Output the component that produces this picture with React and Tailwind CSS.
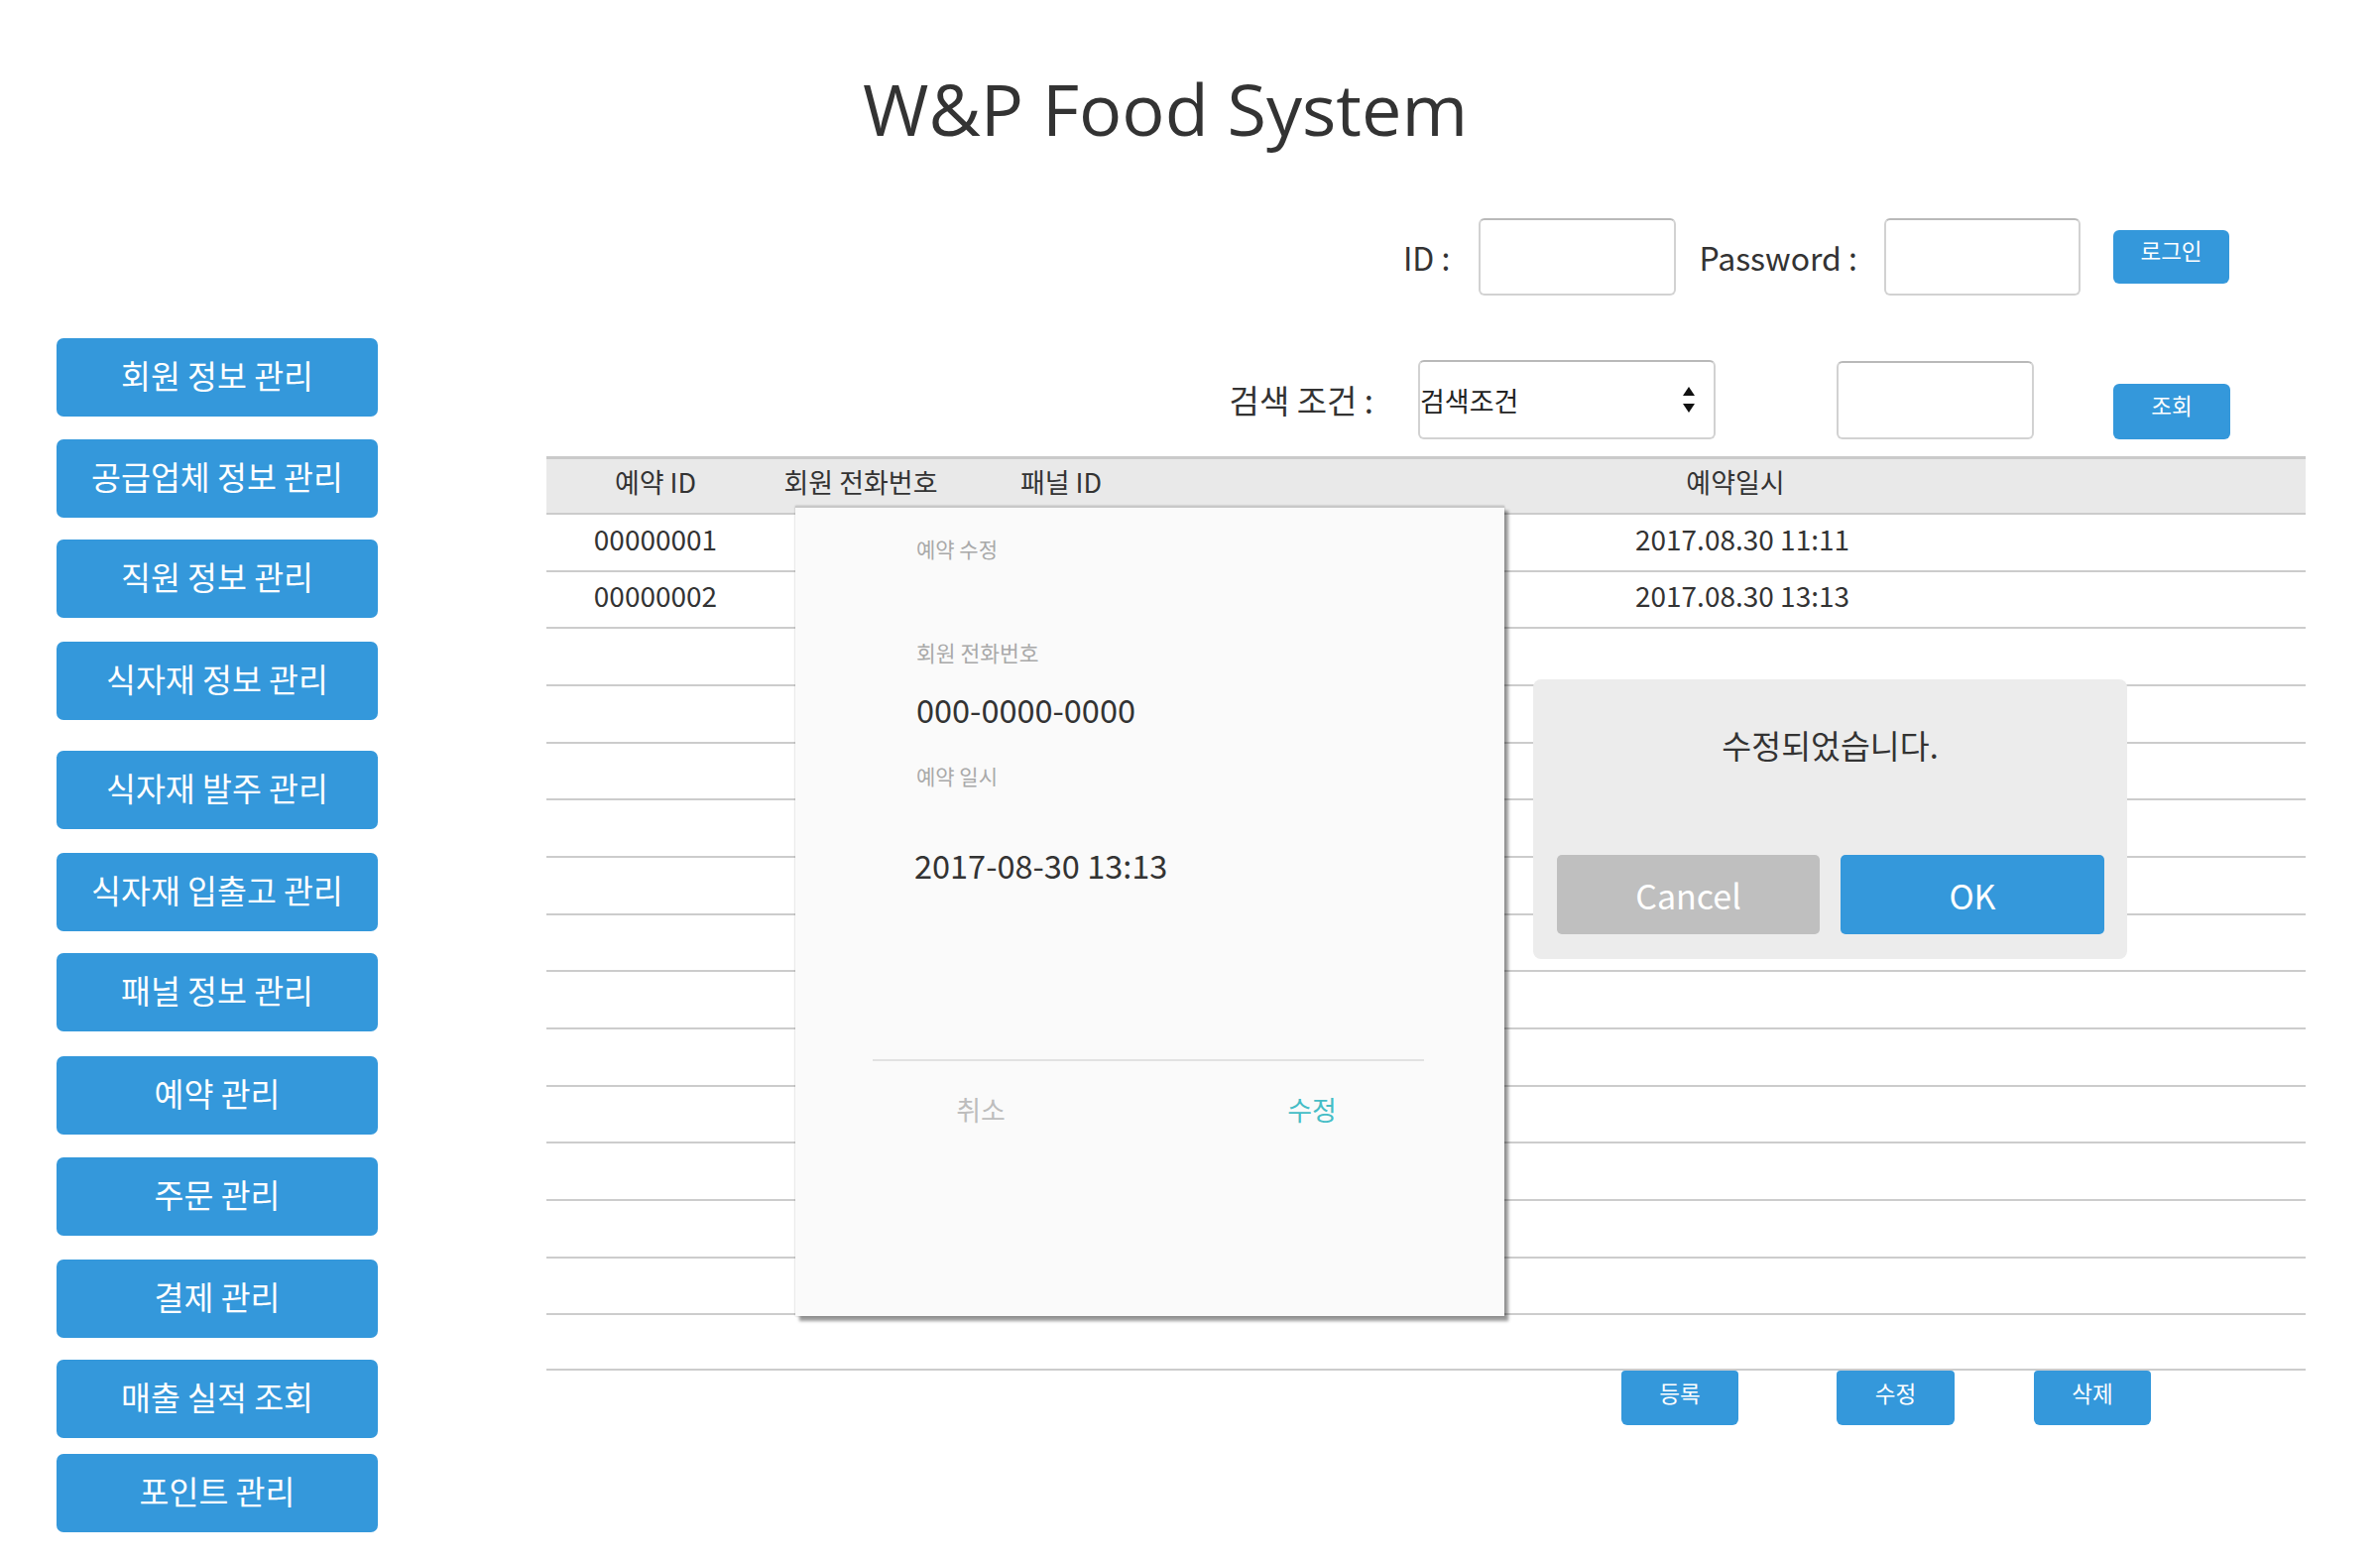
const menu = [
  ["회원 정보 관리", "mt-0"],
  ["공급업체 정보 관리", "mt-[23px]"],
  ["직원 정보 관리", "mt-[22px]"],
  ["식자재 정보 관리", "mt-[24px]"],
  ["식자재 발주 관리", "mt-[31px]"],
  ["식자재 입출고 관리", "mt-[24px]"],
  ["패널 정보 관리", "mt-[22px]"],
  ["예약 관리", "mt-[25px]"],
  ["주문 관리", "mt-[23px]"],
  ["결제 관리", "mt-[24px]"],
  ["매출 실적 조회", "mt-[22px]"],
  ["포인트 관리", "mt-[16px]"],
];

const rows = [
  { id: "00000001", at: "2017.08.30 11:11" },
  { id: "00000002", at: "2017.08.30 13:13" },
  ...Array.from({ length: 13 }, () => ({ id: "", at: "" })),
];

const cols = "grid grid-cols-[220px_194px_210px_1fr] items-center text-center pb-[8px]";

function TextBox({ className = "" }) {
  return (
    <div
      className={`bg-white border-2 border-[#d2d2d2] border-t-[#b9b9b9] rounded-[6px] ${className}`}
    />
  );
}

function SmallBlue({ children, className = "" }) {
  return (
    <button
      className={`bg-[#3498db] text-white rounded-[6px] text-[22.5px] leading-[24px] flex justify-center ${className}`}
    >
      {children}
    </button>
  );
}

function EditDialog() {
  return (
    <div className="absolute left-[802px] top-[510px] w-[715px] h-[817px] bg-[#fafafa] border-t-2 border-[#c8c8c8] shadow-[4px_5px_3px_rgba(0,0,0,0.4),0_0_2px_rgba(0,0,0,0.25)]">
      <div className="pl-[122px] pt-[26px]">
        <p className="text-[21px] leading-[30px] text-[#a9a9a9]">예약 수정</p>
        <p className="mt-[75px] text-[21.5px] leading-[30px] text-[#a9a9a9]">회원 전화번호</p>
        <p className="mt-[22px] text-[32.5px] leading-[40px] text-[#333]">000-0000-0000</p>
        <p className="mt-[32px] text-[21px] leading-[30px] text-[#a9a9a9]">예약 일시</p>
        <p className="mt-[53px] text-[32.5px] leading-[44px] text-[#333] -ml-[2px]">2017-08-30 13:13</p>
      </div>
      <div className="mt-[174px] ml-[78px] w-[556px] h-[2px] bg-[#e2e2e2]" />
      <div className="mt-[31px] ml-[78px] flex">
        <span className="w-[218px] text-center text-[27px] leading-[36px] text-[#bdbdbd]">취소</span>
        <span className="ml-[116px] w-[218px] text-center text-[27px] leading-[36px] text-[#45bdc6]">수정</span>
      </div>
    </div>
  );
}

function AlertDialog() {
  return (
    <div className="absolute left-[1546px] top-[685px] w-[599px] h-[282px] bg-[#ececec] rounded-[8px]">
      <p className="pt-[46px] text-center text-[32.5px] leading-[40px] text-[#333]">수정되었습니다.</p>
      <div className="mt-[91px] ml-[24px] flex gap-[21px]">
        <button className="w-[265px] h-[80px] rounded-[5px] bg-[#bfbfbf] text-white text-[34px]">Cancel</button>
        <button className="w-[266px] h-[80px] rounded-[5px] bg-[#3498db] text-white text-[34px]">OK</button>
      </div>
    </div>
  );
}

export default function App() {
  return (
    <div className="relative w-[2400px] h-[1576px] overflow-hidden bg-white text-[#333] font-['Noto_Sans_CJK_KR','Noto_Sans',sans-serif]">
      <h1 className="pt-[73px] pr-[50px] text-center text-[72px] leading-[72px] font-normal font-['Open_Sans',sans-serif] text-[#333]">
        W&amp;P Food System
      </h1>

      {/* login */}
      <div className="mt-[75px] h-[78px] flex items-center justify-end pr-[152px]">
        <span className="text-[32px] leading-none">ID :</span>
        <TextBox className="ml-[29px] w-[199px] h-[78px]" />
        <span className="ml-[23px] text-[32px] leading-none">Password :</span>
        <TextBox className="ml-[27px] w-[198px] h-[78px]" />
        <SmallBlue className="ml-[33px] w-[117px] h-[54px] pt-[8px]">로그인</SmallBlue>
      </div>

      <div className="mt-[43px] flex">
        {/* side menu */}
        <nav className="ml-[57px] w-[324px] flex flex-col">
          {menu.map(([label, mt]) => (
            <button
              key={label}
              className={`${mt} h-[79px] pb-[5px] rounded-[7px] bg-[#3498db] text-white text-[32.5px] leading-none flex items-center justify-center`}
            >
              {label}
            </button>
          ))}
        </nav>

        <main className="ml-[170px] w-[1774px]">
          {/* search */}
          <div className="mt-[22px] h-[80px] flex items-center justify-end pr-[76px]">
            <span className="text-[33px] leading-none">검색 조건 :</span>
            <div className="ml-[45px] w-[300px] h-[80px] bg-white border-2 border-[#d2d2d2] border-t-[#b9b9b9] rounded-[6px] flex items-center justify-between pr-[18px]">
              <span className="text-[27px] leading-none text-[#222]">검색조건</span>
              <svg width="14" height="26" viewBox="0 0 14 26">
                <path d="M7 0 L13 9 L1 9 Z" fill="#111" />
                <path d="M1 17 L13 17 L7 26 Z" fill="#111" />
              </svg>
            </div>
            <TextBox className="ml-[122px] w-[199px] h-[79px]" />
            <SmallBlue className="ml-[80px] w-[118px] h-[56px] pt-[9px] self-end">조회</SmallBlue>
          </div>

          {/* table */}
          <div className="mt-[17px]">
            <div className={`${cols} h-[57px] border-t-[3px] border-[#cacaca] bg-[#e9e9e9] text-[27px]`}>
              <span>예약 ID</span>
              <span>회원 전화번호</span>
              <span>패널 ID</span>
              <span>예약일시</span>
            </div>
            {rows.map((r, i) => (
              <div
                key={i}
                className={`${cols} h-[57.67px] border-t-2 border-[#cccccc] text-[28px] ${i === rows.length - 1 ? "border-b-2" : ""}`}
              >
                <span>{r.id}</span>
                <span />
                <span />
                <span className="pl-[14px]">{r.at}</span>
              </div>
            ))}
          </div>

          {/* actions */}
          <div className="flex">
            <SmallBlue className="ml-[1084px] w-[118px] h-[55px] pt-[10px] rounded-t-[4px]">등록</SmallBlue>
            <SmallBlue className="ml-[99px] w-[119px] h-[55px] pt-[10px] rounded-t-[4px]">수정</SmallBlue>
            <SmallBlue className="ml-[80px] w-[118px] h-[55px] pt-[10px] rounded-t-[4px]">삭제</SmallBlue>
          </div>
        </main>
      </div>

      <EditDialog />
      <AlertDialog />
    </div>
  );
}
